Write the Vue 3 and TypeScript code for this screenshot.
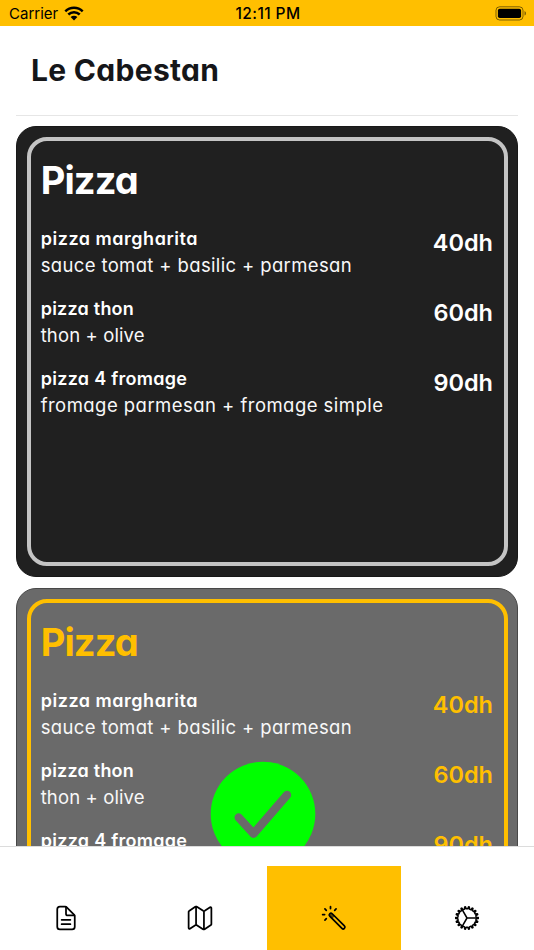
<script setup lang="ts">
interface Dish {
  name: string
  detail: string
  price: string
  nameFit: string
  detailFit: string
}

const dishes: Dish[] = [
  { name: 'pizza margharita', detail: 'sauce tomat + basilic + parmesan', price: '40dh', nameFit: 'n1', detailFit: 'd1' },
  { name: 'pizza thon', detail: 'thon + olive', price: '60dh', nameFit: 'n2', detailFit: 'd2' },
  { name: 'pizza 4 fromage', detail: 'fromage parmesan + fromage simple', price: '90dh', nameFit: 'n3', detailFit: 'd3' },
]

const menus = [
  { id: 1, title: 'Pizza', selected: false },
  { id: 2, title: 'Pizza', selected: true },
]

const polar = (radius: number, degrees: number): string => {
  const a = (degrees * Math.PI) / 180
  return `${(256 + radius * Math.cos(a)).toFixed(1)},${(256 + radius * Math.sin(a)).toFixed(1)}`
}

const cogPoints = Array.from({ length: 18 }, (_, i) => i * 20)
  .flatMap((a) => [polar(206, a - 2), polar(206, a + 2), polar(168, a + 5), polar(168, a + 15)])
  .join(' ')
</script>

<template>
  <div class="screen">
    <header class="status">
      <div class="carrier">
        <span class="carrier-name">Carrier</span>
        <svg class="wifi" viewBox="0 0 20 15">
          <path d="M1.3 5.3a12.5 12.5 0 0 1 17.4 0M4.3 8.5a8.2 8.2 0 0 1 11.4 0" fill="none" stroke="#000" stroke-width="2.5" />
          <path d="M6.6 11.1a4.9 4.9 0 0 1 6.8 0L10 14.5z" />
        </svg>
      </div>
      <span class="time">12:11 PM</span>
      <div class="power">
        <svg class="battery" viewBox="0 0 32 15">
          <rect x="1" y=".8" width="27" height="13.2" rx="3.6" fill="none" stroke="#000" stroke-opacity=".5" stroke-width="1" />
          <rect x="2.9" y="2.7" width="23.2" height="9.4" rx="1.8" />
          <path d="M29.5 5v4.6c2-.8 2-3.8 0-4.6z" fill-opacity=".5" />
        </svg>
      </div>
    </header>

    <main class="content">
      <div class="heading"><h1>Le Cabestan</h1></div>
      <section v-for="menu in menus" :key="menu.id" class="card" :class="{ selected: menu.selected }">
        <div class="frame">
          <h2>{{ menu.title }}</h2>
          <div v-for="dish in dishes" :key="dish.name" class="dish">
            <div class="text">
              <div class="name" :class="dish.nameFit">{{ dish.name }}</div>
              <div class="detail" :class="dish.detailFit">{{ dish.detail }}</div>
            </div>
            <div class="price">{{ dish.price }}</div>
          </div>
        </div>
        <svg v-if="menu.selected" class="check" viewBox="0 0 106 106">
          <circle cx="53" cy="53" r="52.3" fill="#00ff00" />
          <path d="M28.7 56.5l14.8 16.2 33.5-38.7" fill="none" stroke="#6a6a6a" stroke-width="8.4" stroke-linecap="round" stroke-linejoin="round" />
        </svg>
      </section>
    </main>

    <nav class="tabs">
      <div class="tab first">
        <svg class="icon" viewBox="0 0 512 512">
          <path d="M416 221.25V416a48 48 0 0 1-48 48H144a48 48 0 0 1-48-48V96a48 48 0 0 1 48-48h98.75a32 32 0 0 1 22.62 9.37l141.26 141.26a32 32 0 0 1 9.37 22.62z" />
          <path d="M256 56v120a32 32 0 0 0 32 32h120M176 288h160M176 368h160" />
        </svg>
      </div>
      <div class="tab">
        <svg class="icon" viewBox="0 0 512 512">
          <path d="M313.27 124.64L198.73 51.36a32 32 0 0 0-29.28.35L56.51 127.49A16 16 0 0 0 48 141.63v295.8a16 16 0 0 0 23.49 14.14l97.82-63.79a32 32 0 0 1 29.5-.24l111.86 73a32 32 0 0 0 29.27-.11l115.43-75.94a16 16 0 0 0 8.63-14.2V74.57a16 16 0 0 0-23.49-14.14l-98 63.86a32 32 0 0 1-29.24.35zM328 128v336M184 48v336" />
        </svg>
      </div>
      <div class="tab active">
        <svg class="icon" viewBox="0 0 512 512">
          <rect x="280.48" y="122.9" width="63.03" height="378.2" rx="31.52" transform="rotate(-45 312 312)" />
          <path class="tip" d="M178.38 178.38a31.64 31.64 0 0 0 0 44.75L223.25 268 268 223.25l-44.87-44.87a31.64 31.64 0 0 0-44.75 0z" />
          <path class="spark" d="M48 192h36M90.18 90.18l25 25M192 48v36M293.82 90.18l-25 25M115.18 268.82l-25 25" />
        </svg>
      </div>
      <div class="tab">
        <svg class="icon cog" viewBox="0 0 512 512">
          <polygon :points="cogPoints" />
          <path d="M256 256h165M256 256l-83-143M256 256l-83 143" />
        </svg>
      </div>
    </nav>
  </div>
</template>

<style>
body {
  margin: 0;
  background: #fff;
}
</style>

<style scoped>
.screen {
  width: 534px;
  height: 950px;
  display: flex;
  flex-direction: column;
  overflow: hidden;
  background: #fff;
  font-family: Inter, "Open Sans", sans-serif;
}
.status {
  flex: none;
  height: 26px;
  display: grid;
  grid-template-columns: 1fr auto 1fr;
  align-items: center;
  padding: 0 7px 0 9px;
  box-sizing: border-box;
  background: #ffbf00;
  color: #000;
  font-size: 15px;
}
.carrier {
  display: flex;
  align-items: center;
  gap: 6px;
}
.carrier-name {
  padding-top: 2px;
  line-height: 24px;
}
.wifi {
  width: 20px;
  height: 15px;
}
.time {
  padding-top: 2px;
  line-height: 24px;
  font-size: 15.5px;
  font-weight: 550;
  letter-spacing: 0.4px;
}
.power {
  display: flex;
  justify-content: flex-end;
}
.battery {
  width: 32px;
  height: 15px;
}
.content {
  flex: none;
  height: 820px;
  box-sizing: border-box;
  padding: 0 16px;
  overflow: hidden;
  font-feature-settings: "cv11";
}
.heading {
  height: 90px;
  box-sizing: border-box;
  padding: 24px 15px 0;
  border-bottom: 1px solid #e6e6e6;
  margin-bottom: 10.4px;
}
h1 {
  margin: 0;
  font-size: 30px;
  line-height: 40px;
  font-weight: 700;
  letter-spacing: 0.3px;
  color: #151619;
  white-space: nowrap;
}
.card {
  position: relative;
  height: 451px;
  box-sizing: border-box;
  padding: 10px 9.5px;
  border: 1px solid #181818;
  border-radius: 20px;
  margin-bottom: 11px;
  background: #202020;
  color: #fff;
}
.frame {
  height: 429px;
  box-sizing: border-box;
  border: 4px solid #c4c4c4;
  border-radius: 20px;
  padding: 10.6px 10.5px 0 10.2px;
}
h2 {
  margin: 0 0 16.3px;
  font-size: 38px;
  line-height: 57px;
  font-weight: 750;
  letter-spacing: -0.9px;
}
.dish {
  display: flex;
  justify-content: space-between;
  height: 54px;
  margin-bottom: 15.8px;
  white-space: nowrap;
}
.name,
.detail {
  font-size: 18px;
  line-height: 27px;
}
.name {
  font-weight: 600;
}
.detail {
  font-size: 18.5px;
  font-weight: 380;
  color: #f8f8f8;
}
.n1 {
  letter-spacing: 0.52px;
}
.n2 {
  letter-spacing: 0.22px;
}
.n3 {
  letter-spacing: 0.28px;
}
.d1 {
  letter-spacing: 0.36px;
}
.d2 {
  letter-spacing: 0.12px;
}
.d3 {
  letter-spacing: 0.46px;
}
.price {
  font-size: 23.5px;
  line-height: 35px;
  font-weight: 600;
}
.selected {
  background: #6a6a6a;
  border-color: #484848;
}
.selected .frame {
  border-color: #ffbf00;
}
.selected h2,
.selected .price {
  color: #ffbf00;
}
.check {
  position: absolute;
  left: 193px;
  top: 171.5px;
  width: 106px;
  height: 106px;
}
.tabs {
  flex: 1;
  display: grid;
  grid-template-columns: repeat(4, 1fr);
  padding-top: 19px;
  box-sizing: border-box;
  border-top: 1px solid #dcdcdc;
}
.tab {
  display: flex;
  justify-content: center;
  padding-top: 37.5px;
}
.first {
  padding-right: 2px;
}
.active {
  background: #ffbf00;
}
.icon {
  width: 28px;
  height: 28px;
  fill: none;
  stroke: #000;
  stroke-width: 32;
  stroke-linecap: round;
  stroke-linejoin: round;
}
.cog {
  stroke-width: 28;
}
.tip {
  fill: #000;
  fill-opacity: 0.6;
  stroke: none;
}
</style>
